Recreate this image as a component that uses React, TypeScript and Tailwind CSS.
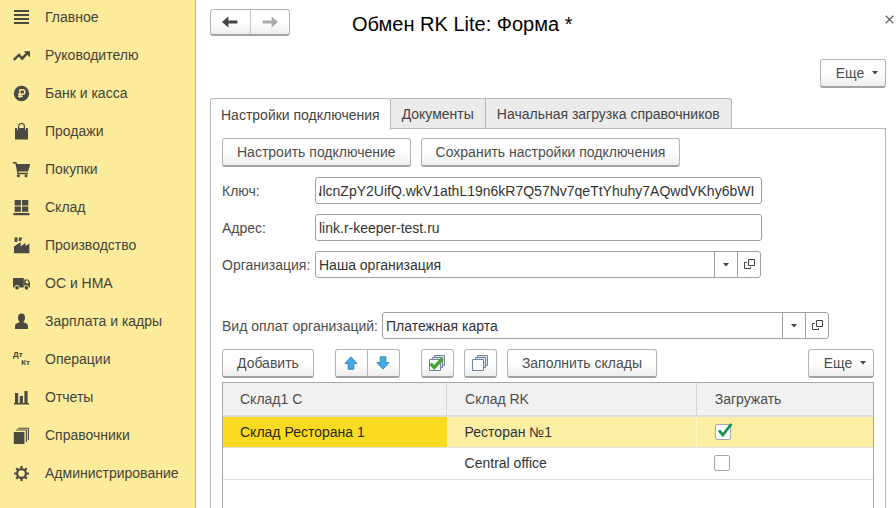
import { useEffect, useRef, useState, type ReactNode } from 'react';

const INK = '#4b4a40';

const icons: Record<string, ReactNode> = {
  main: <path d="M1 1h15v2H1zM1 5h15v2H1zM1 9h15v2H1zM1 13h15v2H1z" />,
  chief: (
    <>
      <path d="M0.8 13 6 8l3.2 3.6L14 6.4" fill="none" stroke={INK} strokeWidth="2.4" />
      <path d="M10.8 4.2H17v6z" />
    </>
  ),
  bank: (
    <>
      <circle cx="8.5" cy="8.5" r="7.7" />
      <path d="M7 13V4.7h2.6a2.2 2.2 0 0 1 0 4.6H5M5 11.2h4.8" fill="none" stroke="#fbeb9b" strokeWidth="1.4" />
    </>
  ),
  sales: (
    <>
      <path d="M2 5h2.2v2h1.6V5h5.4v2h1.6V5H15v11.5H2z" />
      <path d="M5.6 7V3.4a2.9 2.9 0 0 1 5.8 0V7" fill="none" stroke={INK} strokeWidth="1.2" />
    </>
  ),
  shopping: (
    <>
      <path d="M0 1h3.4l.8 2H17.4l-2.4 7.4H5.2l.5 1.4h9.3v1.4H4.5L2.4 2.4H0z" />
      <circle cx="5.4" cy="14.8" r="1.5" />
      <circle cx="13" cy="14.8" r="1.5" />
    </>
  ),
  store: <path d="M1.6 1h6.3v5.6H1.6zM9 1h6.3v5.6H9zM1.6 7.6h6.3v5.2H1.6zM9 7.6h6.3v5.2H9zM.4 14h16v2.2H.4z" />,
  factory: <path d="M1.6 .6h3.2L4.2 5H1.6zM6 .6h3.2L8 4H5.6zM1 9.4 7.6 5v4.2L12.6 6v3L16.4 6.6v9.6H1z" />,
  truck: (
    <>
      <path d="M0 3h10.8v9.6H0zM11.2 4.4h4L17.4 8v4.6h-6.2z" />
      <path d="M12.8 5.6h1.8L16 8.2h-3.2z" fill="#fbeb9b" />
      <circle cx="4" cy="12.8" r="2.3" stroke="#fbeb9b" />
      <circle cx="13.4" cy="12.8" r="2.3" stroke="#fbeb9b" />
    </>
  ),
  person: (
    <>
      <ellipse cx="8.5" cy="4.8" rx="3.5" ry="4.2" />
      <path d="M2 16v-3.2c0-1.8 1.6-2.8 4.2-3.4l.6-2h3.4l.6 2c2.6.6 4.2 1.6 4.2 3.4V16z" />
    </>
  ),
  reports: <path d="M1 14h15v1.6H1zM2 4h3.2v10H2zM6.8 7H10v7H6.8zM11.4 2h3.2v12h-3.2z" />,
  books: (
    <>
      <path d="M.8 5h10.6v12H.8z" />
      <path d="M3 3h10.4v12M5.2 1.2h10.2V13" fill="none" stroke={INK} strokeWidth="1.1" />
    </>
  ),
  gear: (
    <>
      <circle cx="8.5" cy="8.5" r="4.4" fill="none" stroke={INK} strokeWidth="2.2" />
      <path
        d="M8.5 1v3M8.5 13v3M1 8.5h3M13 8.5h3M3.2 3.2l2.1 2.1M11.7 11.7l2.1 2.1M3.2 13.8l2.1-2.1M11.7 5.3l2.1-2.1"
        stroke={INK}
        strokeWidth="2.2"
      />
    </>
  ),
};

const sections = [
  ['main', 'Главное'],
  ['chief', 'Руководителю'],
  ['bank', 'Банк и касса'],
  ['sales', 'Продажи'],
  ['shopping', 'Покупки'],
  ['store', 'Склад'],
  ['factory', 'Производство'],
  ['truck', 'ОС и НМА'],
  ['person', 'Зарплата и кадры'],
  ['operations', 'Операции'],
  ['reports', 'Отчеты'],
  ['books', 'Справочники'],
  ['gear', 'Администрирование'],
];

function SectionIcon({ name }: { name: string }) {
  if (name === 'operations') {
    return (
      <span aria-hidden="true" className="flex w-[17px] flex-col text-[8px] leading-[8px] font-bold">
        <span>Дт</span>
        <span className="self-end">Кт</span>
      </span>
    );
  }
  return (
    <svg aria-hidden="true" viewBox="0 0 17 17" className="size-[17px] shrink-0" fill={INK}>
      {icons[name]}
    </svg>
  );
}

const face =
  'border border-[#b5b5b5] border-b-2 border-b-[#a3a3a3] bg-linear-to-b from-white from-50% to-[#ededed] text-[#4d4d4d]';

function Btn({ children, className = 'px-[14px]', label }: { children: ReactNode; className?: string; label?: string }) {
  return (
    <button
      type="button"
      aria-label={label}
      className={`flex h-[29px] items-center justify-center rounded-[3px] whitespace-nowrap ${face} ${className}`}
    >
      {children}
    </button>
  );
}

function Caret() {
  return (
    <svg aria-hidden="true" viewBox="0 0 6 4" className="h-1 w-1.5" fill="#444">
      <path d="M0 0h6L3 3.6z" />
    </svg>
  );
}

function MoreButton() {
  return (
    <Btn className="w-[66px] gap-2 pl-2">
      Еще
      <Caret />
    </Btn>
  );
}

function NavArrow({ color, flip }: { color: string; flip?: boolean }) {
  return (
    <svg aria-hidden="true" viewBox="0 0 16 12" className={`h-3 w-4 ${flip ? 'rotate-180' : ''}`} fill={color}>
      <path d="M0 6 6.4.6v4H15.4v2.8H6.4v4z" />
    </svg>
  );
}

function MoveArrow({ flip }: { flip?: boolean }) {
  return (
    <svg aria-hidden="true" viewBox="0 0 14 14" className={`size-3.5 ${flip ? 'rotate-180' : ''}`}>
      <path d="M7 .8 13 7.4H9.8v5.8H4.2V7.4H1z" fill="#45abe4" stroke="#2a83b8" strokeWidth="0.9" strokeLinejoin="round" />
    </svg>
  );
}

function Stack({ checked }: { checked?: boolean }) {
  return (
    <svg aria-hidden="true" viewBox="0 0 18 18" className="size-[18px]" fill="#f8fafc" stroke="#6f8496">
      <path d="M6.5 1.5h10v10h-10z" fill="#dfe7ec" />
      <path d="M4.5 3.5h10v10h-10z" fill="#dfe7ec" />
      <path d="M1.5 5.5h11v11h-11z" />
      {checked && <path d="M2.6 9.6 6.2 13.4 14.4 4.6" fill="none" stroke="#46a52c" strokeWidth="3.4" />}
    </svg>
  );
}

function Choice({ id, value, width }: { id: string; value: string; width: string }) {
  return (
    <div className={`flex h-[27px] flex-1 overflow-hidden rounded-[3px] border border-[#a0a0a0] bg-white ${width}`}>
      <div className="relative flex flex-1">
        <select id={id} className="flex-1 appearance-none pl-[3px] text-[#333] outline-none">
          <option>{value}</option>
        </select>
        <span className="pointer-events-none absolute inset-y-0 right-0 flex w-[23px] items-center justify-center border-l border-[#a0a0a0]">
          <Caret />
        </span>
      </div>
      <button type="button" aria-label="Открыть" className="flex w-[23px] items-center justify-center border-l border-[#a0a0a0]">
        <svg aria-hidden="true" viewBox="0 0 11 11" className="size-[11px]" fill="none" stroke="#444">
          <path d="M4.5.5h6v6h-6zM3 3.5H.5v6h6V8" />
        </svg>
      </button>
    </div>
  );
}

function Tick({ label, initial }: { label: string; initial: boolean }) {
  const [on, setOn] = useState(initial);
  return (
    <span className="relative block size-4">
      <input
        type="checkbox"
        aria-label={label}
        checked={on}
        onChange={() => setOn(!on)}
        className="block size-4 appearance-none rounded-[2px] border border-[#a6a6a6] bg-white"
      />
      {on && (
        <svg aria-hidden="true" viewBox="0 0 18 18" className="pointer-events-none absolute bottom-0 left-0 size-[18px]">
          <path d="M4 8.4 7.8 13 16.4 2" fill="none" stroke="#12954f" strokeWidth="2.8" />
        </svg>
      )}
    </span>
  );
}

const input = 'h-[27px] w-full max-w-[447px] flex-1 rounded-[3px] border border-[#a0a0a0] bg-white pr-[7px] pl-[3px] text-[#333] outline-none';
const fieldLabel = 'w-[93px] shrink-0 whitespace-nowrap';

export default function App() {
  const keyRef = useRef<HTMLInputElement>(null);
  useEffect(() => {
    if (keyRef.current) keyRef.current.scrollLeft = keyRef.current.scrollWidth;
  }, []);

  return (
    <div className="flex h-screen overflow-hidden bg-white font-['Liberation_Sans',Arial,sans-serif] text-[14px] leading-5 text-[#4d4d4d]">
      <nav className="w-[196px] shrink-0 border-r border-[#cdbb72] bg-[#fbeb9b] pt-[5px]">
        <ul className="flex flex-col gap-3.5">
          {sections.map(([icon, title]) => (
            <li key={icon}>
              <a href="#" className="flex h-6 items-center gap-[15px] pl-[13px] whitespace-nowrap text-[#45433a]">
                <SectionIcon name={icon} />
                {title}
              </a>
            </li>
          ))}
        </ul>
      </nav>

      <main className="flex min-w-0 flex-1 flex-col pr-[10px] pl-[14px]">
        <header className="flex items-start pt-[9px]">
          <div className={`flex h-[27px] w-20 rounded-[3px] ${face}`}>
            <button type="button" aria-label="Назад" className="flex flex-1 items-center justify-center border-r border-[#c8c8c8]">
              <NavArrow color="#444" />
            </button>
            <button type="button" aria-label="Вперед" className="flex flex-1 items-center justify-center">
              <NavArrow color="#aaa" flip />
            </button>
          </div>
          <h1 className="ml-[62px] flex-1 text-[20px] leading-[30px] text-black">Обмен RK Lite: Форма *</h1>
          <button type="button" aria-label="Закрыть" className="-mr-2 pt-1.5">
            <svg aria-hidden="true" viewBox="0 0 9 9" className="size-[9px]" stroke="#666" strokeWidth="1.3">
              <path d="m.7.7 7.6 7.6M8.3.7.7 8.3" />
            </svg>
          </button>
        </header>

        <div className="mt-5 flex justify-end">
          <MoreButton />
        </div>

        <div role="tablist" className="z-10 mt-2.5 flex h-[31px] shrink-0 text-[#444]">
          <button type="button" role="tab" aria-selected="true" className="-mb-px rounded-t-[3px] border border-b-0 border-[#b8b8b8] bg-white px-[10px] whitespace-nowrap">
            Настройки подключения
          </button>
          <button type="button" role="tab" aria-selected="false" className="border-y border-r border-[#b8b8b8] bg-[#ebebeb] px-[11px] whitespace-nowrap">
            Документы
          </button>
          <button type="button" role="tab" aria-selected="false" className="rounded-tr-[3px] border-y border-r border-[#b8b8b8] bg-[#ebebeb] px-[11px] whitespace-nowrap">
            Начальная загрузка справочников
          </button>
        </div>

        <section role="tabpanel" className="-mt-px flex flex-1 flex-col border border-b-0 border-[#b8b8b8] px-[11px] pt-[9px]">
          <div className="flex gap-2.5">
            <Btn>Настроить подключение</Btn>
            <Btn>Сохранить настройки подключения</Btn>
          </div>

          <div className="mt-2.5 flex flex-col gap-2.5">
            <div className="flex items-center">
              <label htmlFor="key" className={fieldLabel}>Ключ:</label>
              <input id="key" ref={keyRef} className={input} defaultValue="VNlcnZpY2UifQ.wkV1athL19n6kR7Q57Nv7qeTtYhuhy7AQwdVKhy6bWI" />
            </div>
            <div className="flex items-center">
              <label htmlFor="address" className={fieldLabel}>Адрес:</label>
              <input id="address" className={input} defaultValue="link.r-keeper-test.ru" />
            </div>
            <div className="flex items-center">
              <label htmlFor="org" className={fieldLabel}>Организация:</label>
              <Choice id="org" value="Наша организация" width="max-w-[446px]" />
            </div>
          </div>

          <div className="mt-[34px] flex items-center gap-1">
            <label htmlFor="payment" className="whitespace-nowrap">Вид оплат организаций:</label>
            <Choice id="payment" value="Платежная карта" width="max-w-[447px]" />
          </div>

          <div className="mt-2.5 flex">
            <Btn>Добавить</Btn>
            <div className={`mx-[21px] flex h-[29px] w-[65px] rounded-[3px] ${face}`}>
              <button type="button" aria-label="Переместить вверх" className="flex flex-1 items-center justify-center border-r border-[#b5b5b5]">
                <MoveArrow />
              </button>
              <button type="button" aria-label="Переместить вниз" className="flex flex-1 items-center justify-center">
                <MoveArrow flip />
              </button>
            </div>
            <div className="flex gap-2.5">
              <Btn className="w-[33px]" label="Установить флажки"><Stack checked /></Btn>
              <Btn className="w-[33px]" label="Снять флажки"><Stack /></Btn>
              <Btn>Заполнить склады</Btn>
            </div>
            <div className="ml-auto">
              <MoreButton />
            </div>
          </div>

          <div className="mt-1 flex-1 border border-b-0 border-[#a8a8a8]">
            <table className="w-full table-fixed border-collapse text-left">
              <thead>
                <tr className="h-[33px] border-b-2 border-[#dcdcdc] bg-[#f1f1f1]">
                  <th className="w-[34.4%] border-r border-[#d5d5d5] pl-[17px] font-normal">Склад1 С</th>
                  <th className="w-[38.4%] border-r border-[#d5d5d5] pl-[18px] font-normal">Склад RK</th>
                  <th className="pl-[18px] font-normal">Загружать</th>
                </tr>
              </thead>
              <tbody className="text-[#333]">
                <tr className="h-[31px] border-b border-[#e2e2e2] bg-[#fcefa3]">
                  <td className="bg-[#fadb21] pl-[17px] text-[#2b2810]">Склад Ресторана 1</td>
                  <td className="border-r border-[#fdf6cf] pl-[18px]">Ресторан №1</td>
                  <td className="pl-[18px]"><Tick label="Загружать: Ресторан №1" initial /></td>
                </tr>
                <tr className="h-8 border-b border-[#e2e2e2]">
                  <td />
                  <td className="pl-[18px]">Central office</td>
                  <td className="pl-[18px]"><Tick label="Загружать: Central office" initial={false} /></td>
                </tr>
              </tbody>
            </table>
          </div>
        </section>
      </main>
    </div>
  );
}
